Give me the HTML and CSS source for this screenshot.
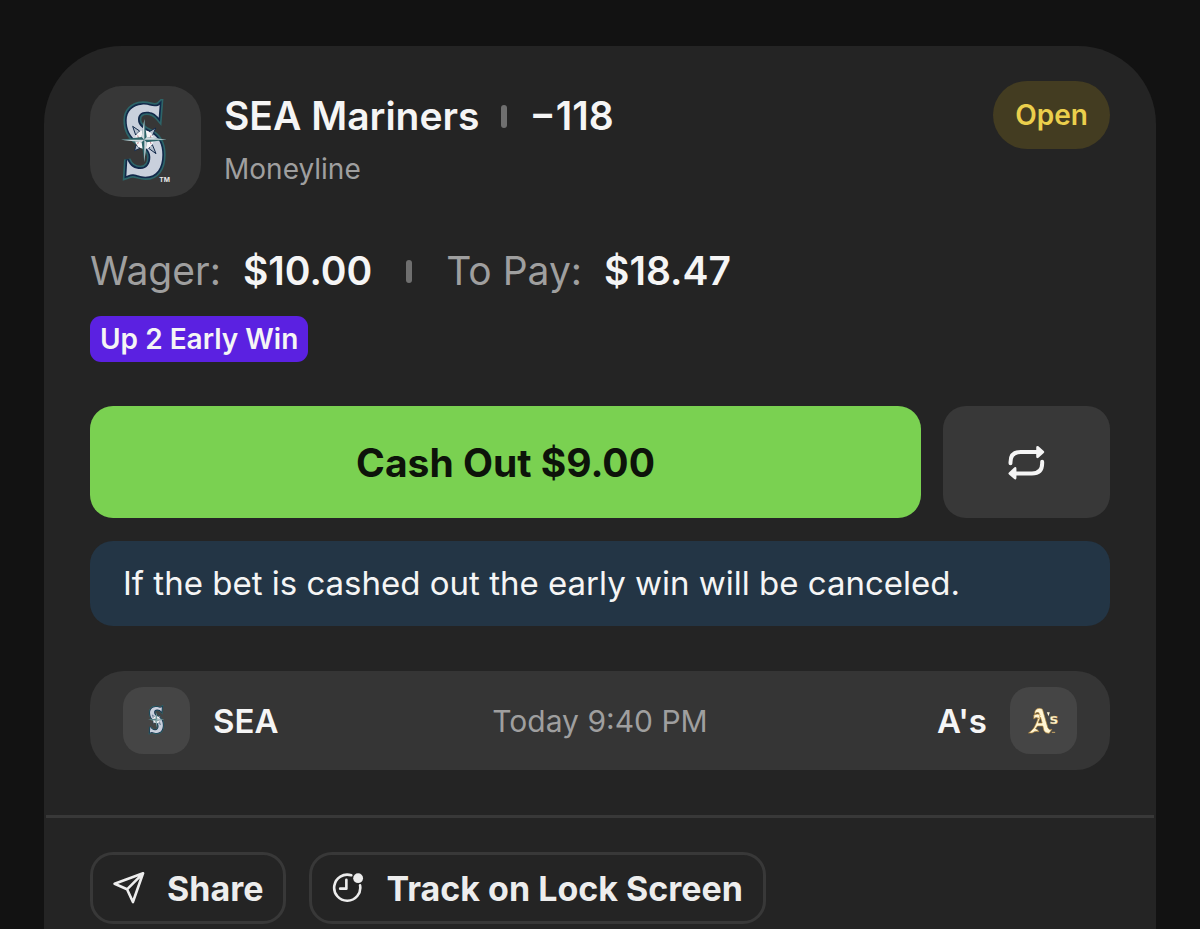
FILE: index.html
```html
<!DOCTYPE html>
<html lang="en">
<head>
    <meta charset="UTF-8">
    <meta name="viewport" content="width=device-width, initial-scale=1.0">
    <title>Open Bet</title>
    <link rel="stylesheet" href="styles.css">
</head>
<body>
    <main class="bet-card">
        <header class="bet-header">
            <div class="team-tile">
                <svg class="sea-logo" viewBox="125 68 150 258" role="img" aria-label="Seattle Mariners">
                    <defs>
                        <path id="sea-shape" d="M241 85 L238 124 C228 112 218 106 202 106 C184 106 176 116 176 130 C176 148 192 158 212 168 C238 181 249 205 249 235 C249 275 232 301 198 301 C182 301 174 295 162 294 C152 293 147 297 141 299 L144 250 C152 270 166 278 184 278 C203 278 213 262 213 242 C213 220 194 208 175 196 C152 181 142 160 142 132 C142 105 160 87 188 85 C205 83 215 90 226 90 C234 90 238 88 241 85 Z"/>
                        <g id="sea-mark">
                            <use href="#sea-shape" fill="#2d6468" stroke="#2d6468" stroke-width="20"/>
                            <use href="#sea-shape" fill="#12294a" stroke="#12294a" stroke-width="10"/>
                            <use href="#sea-shape" fill="#c9d0dc"/>
                            <path d="M160 150 L181 164 L169 176 Z M229 155 L219 179 L208 167 Z M230 232 L208 216 L219 205 Z M166 223 L170 205 L182 216 Z" fill="#b4bfcc" stroke="#12294a" stroke-width="3"/>
                            <circle cx="195" cy="190" r="28" fill="#f4f4f6"/>
                            <path d="M175 177 Q183 190 175 203 M215 177 Q207 190 215 203" fill="none" stroke="#c28b96" stroke-width="3"/>
                            <path d="M195 128 L202 182 L262 190 L202 198 L195 258 L187 198 L125 190 L187 182 Z" fill="#2d6468"/>
                            <path d="M195 128 L195 190 L187 182 Z M262 190 L195 190 L202 182 Z M195 258 L195 190 L202 198 Z M125 190 L195 190 L187 198 Z" fill="#cfd9de"/>
                        </g>
                    </defs>
                    <use href="#sea-mark"/>
                    <text class="logo-tm" x="240" y="318">TM</text>
                </svg>
            </div>
            <div class="bet-title">
                <h1 class="selection">SEA Mariners <span class="separator"></span> <span>−118</span></h1>
                <p class="market">Moneyline</p>
            </div>
            <span class="status">Open</span>
        </header>

        <div class="amounts">
            <span class="label">Wager:</span>
            <strong>$10.00</strong>
            <span class="separator"></span>
            <span class="label">To Pay:</span>
            <strong>$18.47</strong>
        </div>
        <span class="promo">Up 2 Early Win</span>

        <div class="actions">
            <button type="button" class="cash-out">Cash Out $9.00</button>
            <button type="button" class="rebet" aria-label="Bet again">
                <svg class="icon-repeat" viewBox="236 148 111 106" aria-hidden="true">
                    <path d="M243 203 V200 Q243 169 274 169 H324 M339 199 V203 Q339 234 308 234 H258" fill="none" stroke="currentColor" stroke-width="12" stroke-linecap="round"/>
                    <path d="M325 155 L341 169 L325 184 Z M257 219 L241 234 L257 248 Z" fill="currentColor" stroke="currentColor" stroke-width="8" stroke-linejoin="round"/>
                </svg>
            </button>
        </div>
        <p class="notice">If the bet is cashed out the early win will be canceled.</p>

        <section class="game">
            <div class="team">
                <span class="game-tile">
                    <svg class="sea-small" viewBox="125 68 150 258" aria-hidden="true"><use href="#sea-mark"/></svg>
                </span>
                <span>SEA</span>
            </div>
            <time class="game-time">Today 9:40 PM</time>
            <div class="team away">
                <span>A's</span>
                <span class="game-tile">
                    <svg class="as-logo" viewBox="323 140 98 84" role="img" aria-label="Athletics">
                        <g fill="#fff6d6" stroke="#b98a35" stroke-width="2">
                            <path d="M346 154 C350 143 361 142 369 147 L385 202 Q389 211 397 207 L389 219 Q377 220 373 210 L370 197 L354 197 L348 205 Q355 207 358 214 Q347 210 338 218 L327 218 Q336 212 343 203 C350 190 357 176 359 158 Q352 153 346 161 Z M363 170 L356 188 L368 188 Z"/>
                            <path d="M343 164 Q355 158 362 164 L358 175 Q350 168 343 176 Z"/>
                        </g>
                        <path d="M382 156 L391 156 L387 168 Z" fill="#fff6d6"/>
                        <text class="as-letter" x="390" y="191">s</text>
                        <path d="M397 216 H407" stroke="#c9a765" stroke-width="3"/>
                    </svg>
                </span>
            </div>
        </section>

        <footer class="card-footer">
            <button type="button" class="outline-button">
                <svg class="icon" viewBox="247 216 98 98" aria-hidden="true">
                    <path d="M339 220 L252 252 L290 269 L308 308 Z M339 220 L290 269" fill="none" stroke="currentColor" stroke-width="8" stroke-linejoin="round"/>
                </svg>
                Share
            </button>
            <button type="button" class="outline-button">
                <svg class="icon" viewBox="905 216 98 98" aria-hidden="true">
                    <path d="M964 226 A40 40 0 1 0 991 257 M949 240 V267 H930" fill="none" stroke="currentColor" stroke-width="8" stroke-linecap="round" stroke-linejoin="round"/>
                    <circle cx="985" cy="235" r="15" fill="currentColor"/>
                </svg>
                Track on Lock Screen
            </button>
        </footer>
    </main>
</body>
</html>
```

FILE: styles.css
```css
* {
    box-sizing: border-box;
}

body {
    font-family: Inter, "Liberation Sans", sans-serif;
    margin: 0;
    padding: 46px 44px 0;
    background-color: #121212;
    color: #f5f5f5;
}

h1, p {
    margin: 0;
}

button {
    font-family: inherit;
    color: inherit;
    cursor: pointer;
}

.bet-card {
    padding: 35px 46px 6px;
    min-height: calc(100vh - 46px);
    background-color: #242424;
    border-radius: 78px 78px 0 0;
}

.bet-header {
    display: flex;
    align-items: flex-start;
    gap: 23px;
}

.team-tile {
    display: flex;
    align-items: center;
    justify-content: center;
    width: 111px;
    height: 111px;
    margin-top: 5px;
    background-color: #373737;
    border-radius: 32px;
}

.sea-logo {
    width: 50px;
    height: 86px;
}

.logo-tm {
    font-size: 20px;
    font-weight: 700;
    fill: #e8e8e8;
}

.bet-title {
    flex: 1;
    padding-top: 11px;
}

.selection {
    display: flex;
    align-items: center;
    gap: 22px;
    font-size: 39px;
    line-height: 48px;
    font-weight: 600;
}

.separator {
    width: 6px;
    height: 23px;
    background-color: #6f6f6f;
    border-radius: 3px;
}

.market {
    margin-top: 12px;
    font-size: 28px;
    line-height: 34px;
    color: #9f9f9f;
}

.status {
    padding: 16px 22px;
    font-size: 28px;
    line-height: 36px;
    font-weight: 600;
    color: #ebcf4c;
    background-color: #433c21;
    border-radius: 34px;
}

.amounts {
    display: flex;
    align-items: center;
    gap: 22px;
    margin-top: 50px;
    font-size: 39px;
    line-height: 48px;
}

.amounts strong {
    font-weight: 600;
}

.amounts .separator {
    margin: 0 12px;
}

.amounts .label {
    color: #9f9f9f;
}

.promo {
    display: block;
    width: fit-content;
    margin-top: 21px;
    padding: 5px 10px;
    font-size: 28px;
    line-height: 36px;
    font-weight: 600;
    background-color: #5b21e1;
    border-radius: 11px;
}

.actions {
    display: grid;
    grid-template-columns: 1fr 167px;
    gap: 22px;
    margin-top: 44px;
}

.cash-out, .rebet {
    height: 112px;
    padding: 0;
    border: none;
    border-radius: 23px;
}

.cash-out {
    font-size: 39px;
    font-weight: 700;
    color: #0d130a;
    background-color: #7ad151;
}

.cash-out:hover {
    background-color: #6cc143;
}

.rebet {
    display: flex;
    align-items: center;
    justify-content: center;
    background-color: #383838;
}

.icon-repeat {
    width: 37px;
    height: 35px;
}

.notice {
    margin-top: 23px;
    padding: 21px 33px;
    font-size: 33px;
    line-height: 43px;
    background-color: #233545;
    border-radius: 23px;
}

.game {
    display: grid;
    grid-template-columns: 1fr auto 1fr;
    align-items: center;
    margin-top: 45px;
    padding: 16px 33px;
    background-color: #353535;
    border-radius: 34px;
}

.team {
    display: flex;
    align-items: center;
    gap: 23px;
    font-size: 33px;
    font-weight: 600;
}

.away {
    justify-content: flex-end;
}

.game-tile {
    display: flex;
    align-items: center;
    justify-content: center;
    width: 67px;
    height: 67px;
    background-color: #454545;
    border-radius: 20px;
}

.sea-small {
    width: 18px;
    height: 31px;
}

.as-logo {
    width: 33px;
    height: 28px;
}

.as-letter {
    font-family: "DejaVu Sans", sans-serif;
    font-size: 44px;
    font-weight: 700;
    fill: #fff6d6;
    stroke: #b98a35;
    stroke-width: 1px;
}

.game-time {
    font-size: 30px;
    color: #9f9f9f;
}

.card-footer {
    display: flex;
    gap: 23px;
    margin: 45px -44px 0;
    padding: 34px 44px 0;
    border-top: 3px solid #383838;
}

.outline-button {
    display: flex;
    align-items: center;
    gap: 22px;
    height: 72px;
    padding: 0 20px;
    font-size: 34px;
    font-weight: 700;
    color: #ededed;
    background-color: transparent;
    border: 3px solid #383838;
    border-radius: 23px;
}

.icon {
    width: 32px;
    height: 32px;
}
```
